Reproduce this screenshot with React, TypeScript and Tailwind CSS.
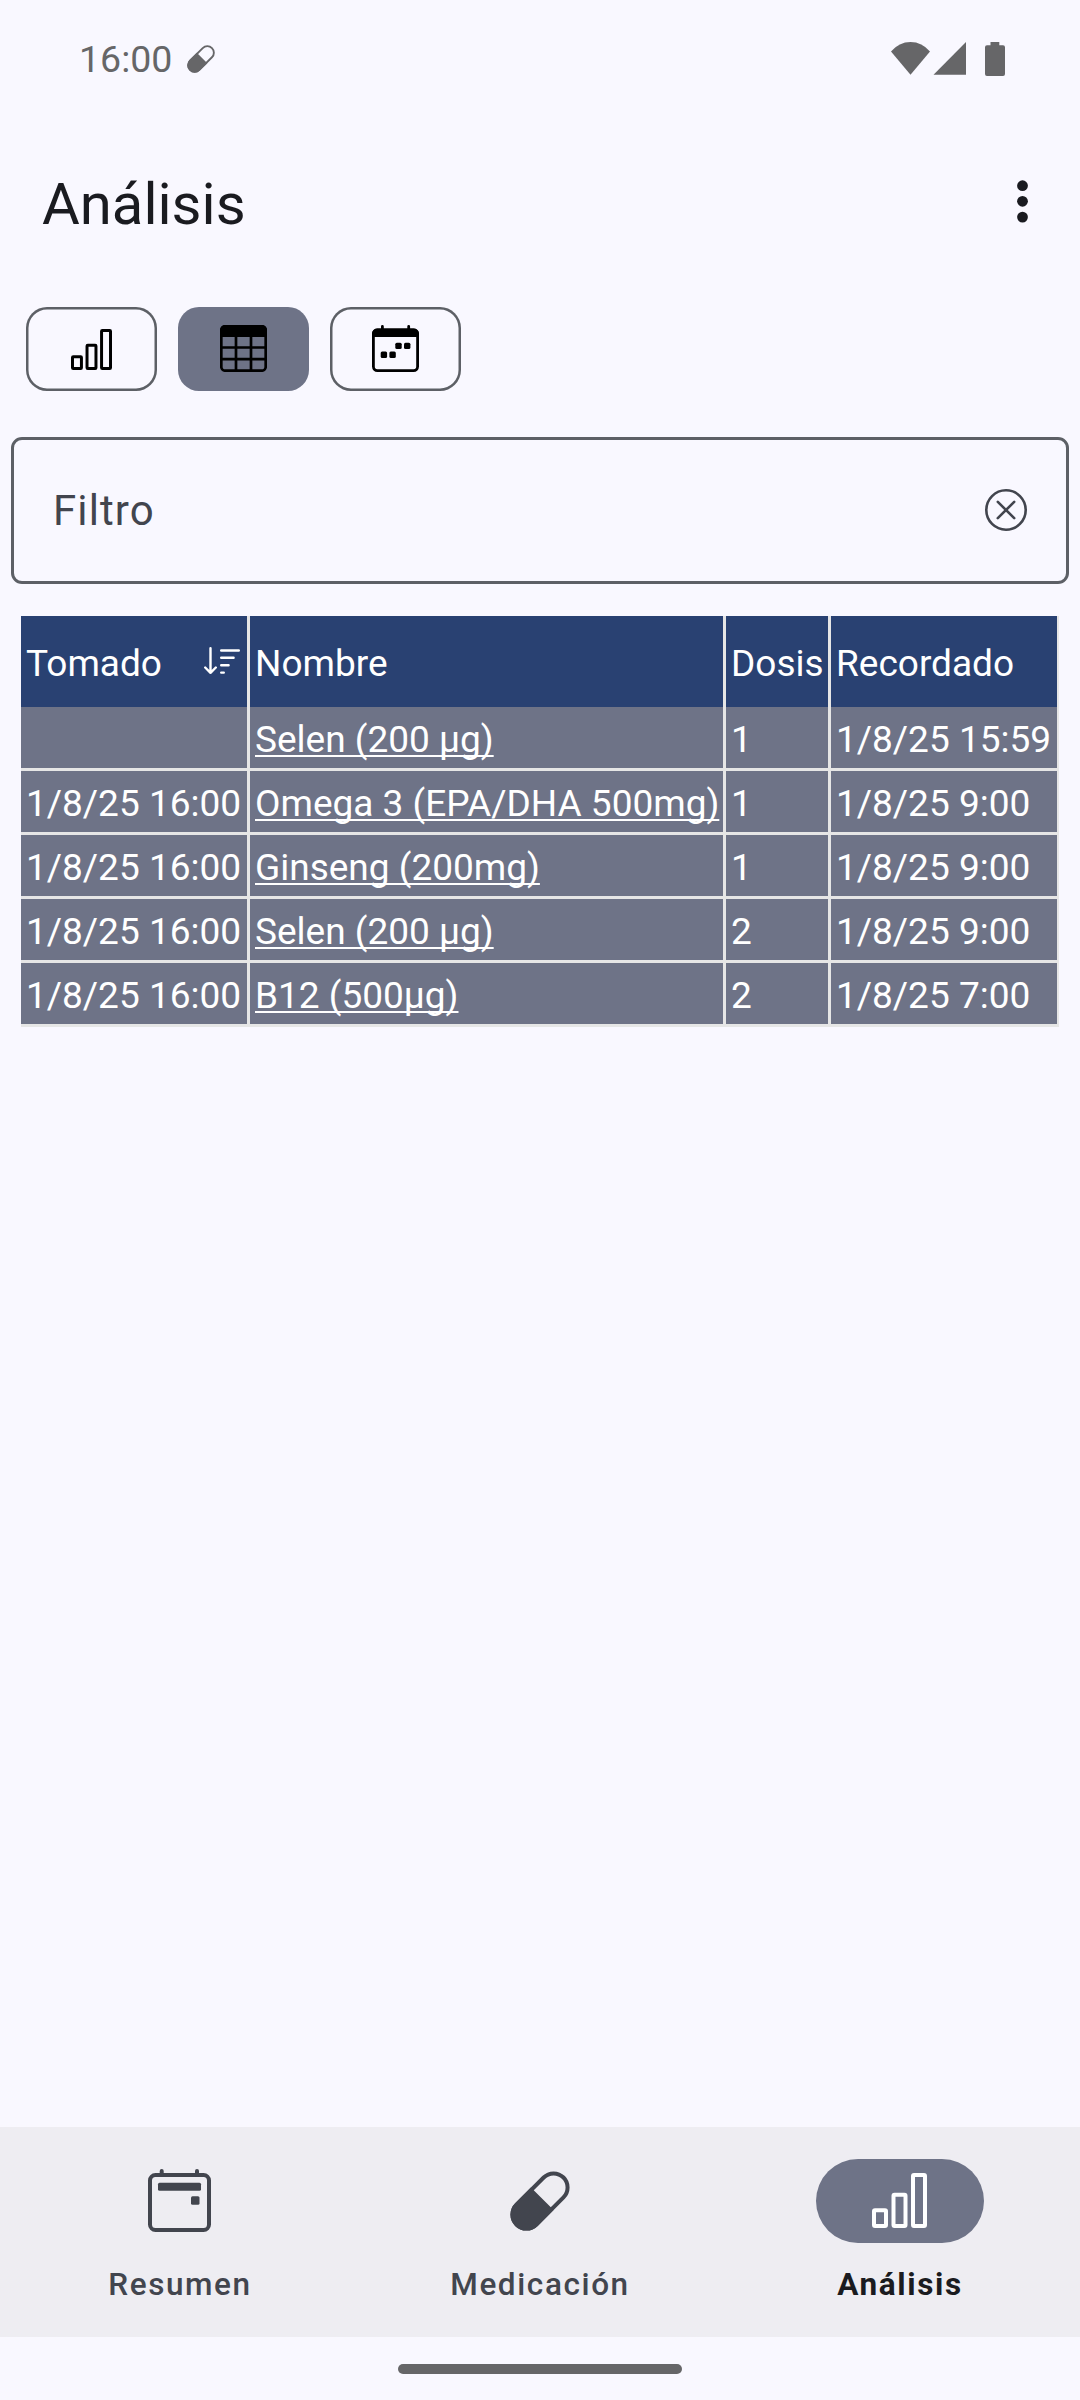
import type { ReactNode } from "react";

const COLUMNS = ["Tomado", "Nombre", "Dosis", "Recordado"];

const ROWS = [
  { taken: "", name: "Selen (200 µg)", dose: "1", reminded: "1/8/25 15:59" },
  { taken: "1/8/25 16:00", name: "Omega 3 (EPA/DHA 500mg)", dose: "1", reminded: "1/8/25 9:00" },
  { taken: "1/8/25 16:00", name: "Ginseng (200mg)", dose: "1", reminded: "1/8/25 9:00" },
  { taken: "1/8/25 16:00", name: "Selen (200 µg)", dose: "2", reminded: "1/8/25 9:00" },
  { taken: "1/8/25 16:00", name: "B12 (500µg)", dose: "2", reminded: "1/8/25 7:00" },
];

const GRID = "grid grid-cols-[226px_473px_102px_226px] gap-x-[3px] pr-[2px]";

function PillIcon({ className }: { className?: string }) {
  return (
    <svg viewBox="0 0 60 60" className={className} fill="none">
      <g transform="rotate(-45 30 30)">
        <rect x="-3.2" y="16" width="66.4" height="28" rx="14" stroke="currentColor" strokeWidth="4" />
        <path d="M33.2 14H10.8a16 16 0 0 0 0 32H33.2z" fill="currentColor" />
      </g>
    </svg>
  );
}

function BarsIcon({ className }: { className?: string }) {
  return (
    <svg viewBox="0 0 55 55" className={className} fill="none" stroke="currentColor" strokeWidth="4">
      <rect x="2" y="37.3" width="12" height="15.7" rx="1" />
      <rect x="21.5" y="21.7" width="12" height="31.3" rx="1" />
      <rect x="41" y="2" width="12" height="51" rx="1" />
    </svg>
  );
}

function TableIcon() {
  return (
    <svg viewBox="0 0 47 47" className="-mt-px h-[47px] w-[47px]" fill="none" stroke="currentColor" strokeWidth="2.7">
      <rect x="1.3" y="1.3" width="44.4" height="44.4" rx="4" />
      <path d="M0 12V5a5 5 0 0 1 5-5h37a5 5 0 0 1 5 5v7z" fill="currentColor" stroke="none" />
      <path d="M16 11v35M31 11v35M1 22.5h45M1 34.2h45" />
    </svg>
  );
}

function CalendarIcon() {
  return (
    <svg viewBox="0 0 47 47" className="-mt-px h-[47px] w-[47px]" fill="none" stroke="currentColor" strokeWidth="2.8">
      <rect x="1.4" y="5" width="44.2" height="40.6" rx="4" />
      <path d="M0 12V8.5a5 5 0 0 1 5-5h37a5 5 0 0 1 5 5V12z" fill="currentColor" stroke="none" />
      <path d="M10.4 1.4v5M36.7 1.4v5" strokeLinecap="round" />
      <g fill="currentColor" stroke="none">
        <rect x="8.7" y="26.5" width="6.4" height="6.4" rx="1.5" />
        <rect x="17.4" y="26.5" width="6.4" height="6.4" rx="1.5" />
        <rect x="23.3" y="17.7" width="6.4" height="6.4" rx="1.5" />
        <rect x="32" y="17.7" width="6.4" height="6.4" rx="1.5" />
      </g>
    </svg>
  );
}

function AgendaIcon() {
  return (
    <svg viewBox="0 0 63 63" className="-mt-px mr-px h-[63px] w-[63px]" fill="none" stroke="currentColor" strokeWidth="4">
      <rect x="2" y="6" width="59" height="55" rx="5.5" />
      <path d="M13.7 2v4M49 2v4" strokeLinecap="round" />
      <g fill="currentColor" stroke="none">
        <rect x="10" y="13.8" width="43" height="8" rx="1.5" />
        <rect x="43" y="27.3" width="8.5" height="8.5" rx="1.5" />
      </g>
    </svg>
  );
}

function SortIcon() {
  return (
    <svg viewBox="0 0 36 27" className="-mt-[2px] h-[27px] w-9" fill="none" stroke="currentColor" strokeWidth="2.4" strokeLinecap="round" strokeLinejoin="round">
      <path d="M6.5 1.2v24.6M1.2 20.5l5.3 5.3 5.3-5.3M17.2 3.5h17.6M17.2 10.8h12.4M17.2 18.2h7.4M17.2 25.6h2.6" />
    </svg>
  );
}

function StatusBar() {
  return (
    <div className="flex h-[118px] items-center justify-between pl-[79px] pr-[75px] text-[#666668]">
      <div className="flex items-center">
        <span className="text-[37.5px]">16:00</span>
        <PillIcon className="ml-[15px] h-7 w-7 overflow-visible" />
      </div>
      <svg viewBox="0 0 114 34" className="h-[34px] w-[114px]" fill="currentColor">
        <path d="M0 9.5Q8 0 19.5 0T39 9.5L19.5 32.8z" />
        <path d="M42.5 32.8H75V0z" />
        <path d="M99.5 0h8.8v3.3h3.7a2 2 0 0 1 2 2V32a2 2 0 0 1-2 2H96a2 2 0 0 1-2-2V5.3a2 2 0 0 1 2-2h3.5z" />
      </svg>
    </div>
  );
}

function ToggleButton({ active, children }: { active?: boolean; children: ReactNode }) {
  return (
    <button
      className={`flex h-[84px] w-[131px] items-center justify-center rounded-[21px] text-black ${
        active ? "bg-[#6e7387]" : "shadow-[inset_0_0_0_2.5px_#5d6066]"
      }`}
    >
      {children}
    </button>
  );
}

function NavItem({ label, active, children }: { label: string; active?: boolean; children: ReactNode }) {
  return (
    <div className="flex flex-1 flex-col items-center pt-8">
      <div
        className={`flex h-[84px] w-[168px] items-center justify-center rounded-full ${
          active ? "bg-[#6e7387] text-white" : "text-[#42454e]"
        }`}
      >
        {children}
      </div>
      <span
        className={`mt-[22px] text-[31.5px] leading-[40px] tracking-[1.6px] ${
          active ? "font-bold text-[#1a1b20]" : "font-medium text-[#42454e]"
        }`}
      >
        {label}
      </span>
    </div>
  );
}

export default function App() {
  return (
    <div className="flex h-[2400px] w-[1080px] flex-col bg-[#f9f8ff] font-['Roboto',sans-serif]">
      <StatusBar />

      <header className="flex h-[168px] items-center justify-between pl-[42px] pr-[51px]">
        <h1 className="pt-[5px] text-[58px] text-[#1a1b20]">Análisis</h1>
        <svg viewBox="0 0 12 43" className="-mt-px h-[43px] w-3 text-[#1a1b20]" fill="currentColor">
          <circle cx="5.5" cy="5.7" r="5.4" />
          <circle cx="5.5" cy="21.3" r="5.4" />
          <circle cx="5.5" cy="37.1" r="5.4" />
        </svg>
      </header>

      <div className="mt-[21px] flex gap-[21px] pl-[26px]">
        <ToggleButton>
          <BarsIcon className="h-[41px] w-[41px]" />
        </ToggleButton>
        <ToggleButton active>
          <TableIcon />
        </ToggleButton>
        <ToggleButton>
          <CalendarIcon />
        </ToggleButton>
      </div>

      <div className="mx-[11px] mt-[46px] flex h-[147px] items-center justify-between rounded-[11px] border-[3px] border-[#5d6066] pl-[39px] pr-[39px] text-[#42454e]">
        <span className="text-[42px] tracking-[1.1px]">Filtro</span>
        <svg viewBox="0 0 42 42" className="-mt-px h-[42px] w-[42px]" fill="none" stroke="currentColor" strokeWidth="2.6" strokeLinecap="round">
          <circle cx="21" cy="21" r="19.7" />
          <path d="M12.8 12.8l16.4 16.4M29.2 12.8L12.8 29.2" />
        </svg>
      </div>

      <div className="ml-[21px] mt-8 flex w-[1038px] flex-col bg-[#e6e6e6] text-[37px] text-white">
        <div className={GRID}>
          {COLUMNS.map((column, idx) => (
            <div key={column} className="flex h-[91px] items-center justify-between bg-[#294172] pl-[5px] pr-[7px]">
              <span className="pt-[5px]">{column}</span>
              {idx === 0 && <SortIcon />}
            </div>
          ))}
        </div>
        {ROWS.map((row, idx) => (
          <div key={idx} className={`${GRID} mb-[3px] h-[61px] whitespace-nowrap leading-[59px] *:h-[61px] *:bg-[#6e7387] *:px-[5px] *:pt-[3px]`}>
            <div>{row.taken}</div>
            <div className="underline decoration-2 underline-offset-3 [text-decoration-skip-ink:none]">{row.name}</div>
            <div>{row.dose}</div>
            <div>{row.reminded}</div>
          </div>
        ))}
      </div>

      <nav className="mt-auto flex h-[210px] bg-[#eeedf2]">
        <NavItem label="Resumen">
          <AgendaIcon />
        </NavItem>
        <NavItem label="Medicación">
          <PillIcon className="h-[60px] w-[60px] overflow-visible" />
        </NavItem>
        <NavItem label="Análisis" active>
          <BarsIcon className="-mt-px mr-[2px] h-[55px] w-[55px]" />
        </NavItem>
      </nav>
      <div className="flex h-[63px] justify-center pt-[27px]">
        <div className="h-[10px] w-[284px] rounded-full bg-[#666668]" />
      </div>
    </div>
  );
}
